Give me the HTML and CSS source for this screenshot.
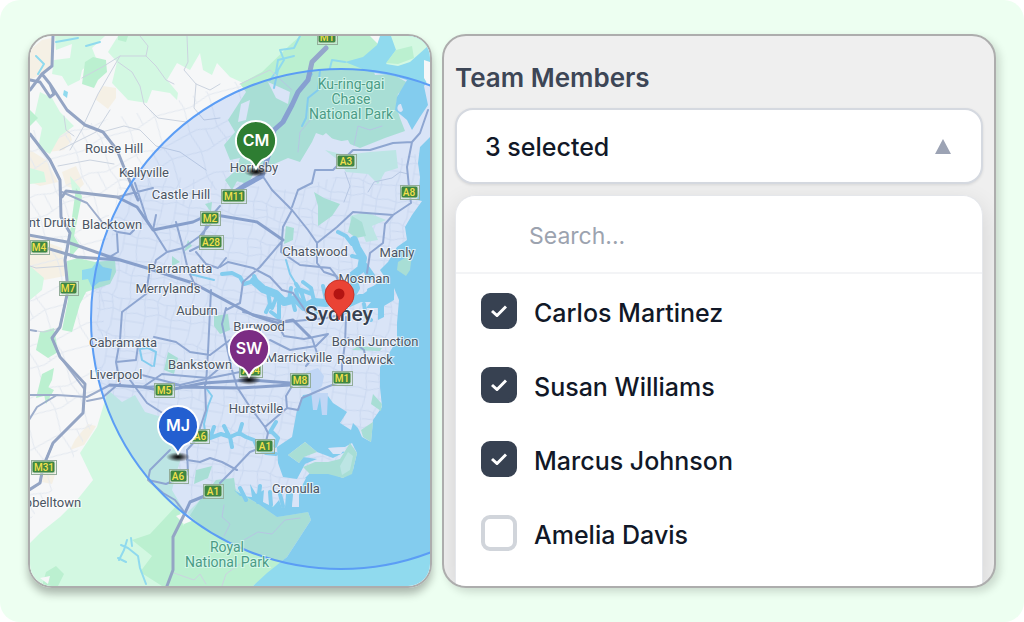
FILE: index.html
```html
<!DOCTYPE html>
<html lang="en">
<head>
    <meta charset="UTF-8">
    <meta name="viewport" content="width=device-width, initial-scale=1">
    <title>Team Map</title>
    <link rel="stylesheet" href="styles.css">
</head>
<body>
<main class="page">
    <section class="map-card" aria-label="Map of Sydney">
        <svg class="map" viewBox="30 36 400 550" preserveAspectRatio="xMidYMid slice">
            <defs>
                <pattern id="streets" width="46" height="38" patternUnits="userSpaceOnUse" patternTransform="rotate(9)">
                    <path class="street" d="M0 8 L14 6 L26 10 L46 8 M0 22 L10 24 L22 20 L35 24 L46 22 M8 38 L9 24 L6 8 L8 0 M22 38 V20 L19 8 L22 0 M36 38 L35 24 L38 9 L36 0 M22 31 L46 31 M0 31 H9 M9 15 L21 14 M29 10 V22"/>
                </pattern>
                <pattern id="blocks" width="58" height="46" patternUnits="userSpaceOnUse" patternTransform="rotate(-22)">
                    <path class="street" d="M0 12 L18 10 L34 15 L58 12 M0 30 L20 33 L42 28 L58 30 M12 46 L14 31 L10 11 L12 0 M40 46 L42 28 L38 14 L40 0 M26 12 L28 31"/>
                </pattern>
                <radialGradient id="shade">
                    <stop offset="0" stop-color="#000" stop-opacity="1"/>
                    <stop offset="0.4" stop-color="#111" stop-opacity="0.7"/>
                    <stop offset="1" stop-color="#222" stop-opacity="0"/>
                </radialGradient>
                <path id="pin" d="M-7 18.700 A20 20 0 1 1 7 18.700 C4 20 2 24 0 27.500 C-2 24 -4 20 -7 18.700 Z"/>
            </defs>

            <!-- land -->
            <rect class="land" x="30" y="36" width="400" height="550"/>
            <path class="sand" d="M30 50 L42 40 L52 38 V66 L42 74 L30 80 Z M103 86 L116 88 L116 98 L108 109 L95 99 Z M50 132 L68 126 L72 140 L64 150 L48 152 L44 142 Z M30 150 L46 160 L58 182 L40 186 L30 182 Z M62 172 L76 166 L84 184 L78 190 L66 186 Z M30 236 L62 248 L65 276 L44 280 L30 270 Z M75 440 L88 424 L96 426 L84 445 L70 450 Z M45 466 L56 472 L52 484 L42 482 Z"/>
            <path fill="url(#blocks)" d="M60 130 L150 110 L240 80 L260 190 H110 L100 400 L90 430 L60 480 L30 520 V130 Z"/>
            <path fill="url(#streets)" d="M120 170 L200 180 L290 190 L430 150 V420 L300 500 L190 500 L150 400 L100 400 L96 290 L110 250 Z"/>

            <!-- parks -->
            <path class="park-light" d="M118 36 H345 V80 L290 86 L270 70 L243 83 L230 77 L217 63 L212 75 L203 70 L200 53 L190 70 L177 63 L167 80 L178 93 L177 100 L170 93 L152 90 L147 103 L128 100 L112 83 L117 62 L108 52 Z"/>
            <path class="park-light" d="M55 36 H105 L92 48 L96 58 L82 70 L80 80 L68 86 L62 76 L52 74 L54 60 L70 58 L72 44 L56 50 Z M40 92 L52 98 L60 112 L74 126 L60 136 L50 154 L38 148 L42 128 L34 118 Z M30 168 L44 172 L46 182 L30 184 Z M70 176 L80 188 L82 200 L72 190 Z M30 266 L44 278 L42 290 L30 300 Z"/>
            <path class="park" d="M85 62 L93 57 L106 60 L107 72 L98 80 L94 88 L82 84 Z M118 36 H128 L126 42 L118 40 Z M30 110 L38 118 L30 126 Z M67 261 L78 258 L95 262 L115 260 L116 272 L110 284 L98 288 L86 292 L80 304 L72 332 L62 330 L68 300 Z M40 332 L54 328 L58 352 L48 358 L36 350 Z M76 188 L82 196 L74 236 L80 246 L70 258 L70 232 Z M42 374 L54 368 L52 380 L44 396 L36 398 Z M42 384 L54 390 L46 404 Z"/>
            <path class="park" d="M290 45 L262 72 L240 84 L246 92 L228 120 L235 132 L224 145 L230 160 L240 158 L232 180 L248 184 L258 165 L272 165 L288 158 L300 162 L312 142 L316 133 L330 138 L345 142 L360 148 L385 138 L405 131 L400 118 L396 106 L398 94 L410 84 L392 74 L375 75 L370 60 L384 50 L370 36 H300 Z"/>
            <path class="land" d="M268 82 L290 92 L288 104 L276 98 Z M315 142 L326 133 L336 142 L348 140 L352 148 L330 150 Z M241 104 L250 100 L246 120 L238 122 Z"/>
            <path class="park-light" d="M325 150 L345 155 L370 152 L396 150 L398 168 L385 172 L378 184 L368 174 L346 172 L338 160 Z M350 216 L366 212 L386 220 L372 226 L378 240 L366 242 L362 232 L352 234 Z"/>
            <path class="park" d="M225 180 L234 172 L240 176 L232 190 Z M314 192 L324 198 L340 204 L332 216 L318 226 L318 206 Z M286 226 L294 228 L293 240 L284 244 Z M172 256 L180 262 L172 266 Z M188 240 L192 246 L184 252 Z M214 316 L228 314 L230 330 L220 334 L214 326 Z M352 216 L362 222 L366 236 L356 238 L348 232 Z M205 204 L212 202 L211 212 Z M168 352 L178 358 L174 374 L164 370 Z M358 346 L382 348 L380 351 L352 350 Z"/>
            <path class="park-light" d="M103 407 L108 390 L122 402 L135 395 L145 412 L165 418 L168 440 L182 455 L176 474 L172 490 L186 514 L200 500 L222 480 L257 503 L308 512 L300 537 L253 586 H30 V543 L40 533 L60 517 L77 500 L93 480 L80 453 L97 427 Z"/>
            <path class="park" d="M183 526 L200 500 L216 480 L234 478 L236 492 L257 503 L277 517 L308 512 L311 520 L300 537 L287 557 L253 586 H162 L140 572 L152 556 L132 540 L150 534 L165 518 L178 504 Z M46 572 L56 566 L64 574 L58 586 H42 Z M196 470 L212 466 L208 478 L194 484 Z"/>
            <path class="land" d="M176 516 L186 512 L194 520 L184 524 Z M40 578 L50 576 L48 584 Z"/>

            <!-- ocean and bays -->
            <path class="water" d="M380 36 L377 45 L363 57 L345 62 L370 72 L394 76 L407 80 L397 97 L395 110 L407 120 L412 130 L420 117 L428 105 L424 86 L430 78 V137 L420 147 L418 163 L420 177 L419 190 L417 200 L422 201 L412 215 L405 227 L407 240 L397 247 L388 262 L380 270 L384 276 L374 286 L363 294 L371 302 L366 308 L378 308 L378 320 L384 317 L384 306 L394 300 L394 288 L399 300 L397 323 L397 340 L391 350 L387 357 L380 367 L380 387 L382 407 L373 420 L371 442 L362 437 L358 428 L353 423 L351 430 L340 423 L347 412 L333 403 L328 396 L317 393 L303 395 L297 410 L292 437 L277 447 L278 463 L283 477 L297 479 L305 464 L317 459 L303 457 L299 463 L288 455 L305 442 L317 452 L333 458 L345 452 L328 448 L345 447 L352 443 L357 453 L353 470 L343 478 L330 473 L310 473 L300 483 L298 507 L292 507 L294 493 L286 494 L285 507 L282 508 L279 500 L273 507 L263 502 L264 490 L256 494 L250 484 L252 497 L240 496 L234 490 L257 503 L277 517 L290 515 L308 512 L311 520 L300 537 L287 557 L267 573 L253 586 H430 V36 Z"/>
            <path class="park-light" d="M391 36 H418 L428 46 L410 62 L398 66 L386 64 L396 50 Z"/>
            <path class="park" d="M396 50 L412 46 L414 58 L398 64 L386 63 Z M398 262 L412 254 L410 270 L406 276 L397 270 Z M373 394 L382 404 L381 411 L371 404 Z M361 430 L373 422 L371 442 L363 437 Z M288 455 L305 442 L317 452 L304 457 L299 463 Z M328 462 L340 459 L350 443 L357 453 L352 474 L343 478 L328 474 L310 474 L303 467 L315 462 Z"/>
            <path class="land" d="M328 448 L346 447 L341 454 L333 454 Z M294 482 L306 478 L299 492 L299 507 L292 507 Z M401 104 A3 4 0 1 0 403 110 Z M424 60 L430 62 V88 L424 78 Z"/>
            <path class="park-light" d="M340 466 L348 452 L353 456 L350 470 L342 475 Z"/>
            <path class="airport" d="M303 386 L306 372 L318 368 L324 376 L322 386 L314 393 H328 L327 415 L322 415 L320 397 L317 410 L313 410 L311 390 Z"/>
            <path class="water" d="M82 270 L92 268 L97 261 L103 267 L112 269 L110 280 L99 282 L92 288 L88 279 L82 280 Z M64 90 L68 92 L67 98 L63 95 Z"/>

            <!-- harbour, rivers and creeks -->
            <path class="river wide" d="M254 281 L263 289 L276 294 L284 302 L296 299 L304 307 L314 302 L326 303 L337 298 L349 303 L360 298 L376 298 M350 298 L356 288 L352 276 L361 269 L363 258 L357 248 L354 240 M364 266 L371 276"/>
            <path class="river mid" d="M222 274 L232 273 L240 277 L244 284 L254 281 M258 284 L254 276 M268 292 L270 304 L266 312 M277 296 L272 308 M289 300 L291 288 M298 300 L296 290 M305 304 L302 294 L296 284 M301 290 L312 294 M314 301 L311 288 L303 282 M326 300 L323 286 M335 300 L336 286 M346 300 L346 312 M364 304 L366 317 L371 320 M352 244 L346 236 L338 232 M361 258 L352 256 M369 290 L378 286 M279 302 L279 318 L271 312 M293 302 L295 310 M315 304 L316 313"/>
            <path class="river mid" d="M204 432 L210 438 L221 434 L230 437 L239 433 L246 437 L254 440 L258 449 L266 453 L276 454 M210 438 L214 427 M229 436 L224 426 M239 434 L242 424 M230 437 L232 447 M272 432 L278 438 L275 446 M276 422 L270 432"/>
            <path class="river mid" d="M246 500 L240 488 M258 502 L260 486 M271 505 L270 492 M283 506 L280 494"/>
            <path class="river" d="M296 284 L290 274 L286 260 M206 438 L204 424 L208 406 L212 396 L206 388 M127 540 L124 550 L119 560 M121 545 L128 548 L138 556 L140 568 L146 584 M118 558 L126 562 M132 546 L131 538"/>
            <path class="river" d="M140 349 L148 348 L156 352 L154 366 M140 350 L142 360 L152 366 M190 274 L214 280 M294 56 L278 60 L276 72 L270 80 M300 36 L294 48 L280 50 L284 60 L278 70 L274 88 M320 70 L318 90 L308 98 L306 118 L302 126 M312 74 L304 86 M345 62 L332 60 L330 68 M56 42 L78 38 M86 46 L100 42 M36 56 L44 64 L38 74"/>

            <!-- minor roads -->
            <path class="road thin" d="M140 36 L148 46 L146 56 L120 56 L104 66 L82 78 M187 36 L188 62 L184 70 L196 84 L210 90 L220 84 M196 84 L194 108 L204 120 L220 118 M146 56 L156 66 L166 80 L174 84 M118 62 L132 72 L140 86 L144 104 L158 118 L186 122 M120 56 L98 94 L84 124 M84 126 L70 150 M64 116 L66 130 L74 136 M102 132 L124 126 L140 130 L156 146 L180 152 L206 170 M58 166 L90 160 L114 164 M60 150 L96 132 L110 110 M240 84 L270 70 L292 90 M298 152 L300 132 L312 118 M354 145 L358 126 L370 130 L382 126 M345 172 L350 186 L344 202 M368 192 L374 182 L392 178 L400 172 L408 174 M30 266 L36 268 L65 266 M224 505 L222 517 L230 524 L224 536 M244 540 L258 532 L272 534 L285 520 L300 518 M222 586 L226 574 L240 564 M30 330 L44 332 L60 328 M174 573 L194 580 L200 574 L206 584"/>

            <!-- main roads -->
            <path class="road" d="M117 197 L153 188 M118 232 L130 234 L134 230 M117 234 L118 252 L108 258 M120 384 L116 362 L120 340 L122 312 L146 294 L150 268 M116 362 L136 360 L138 346 M135 183 L147 220 L167 252 L183 248 L200 236 L212 222 M153 230 L156 215 M167 252 L156 260 L154 268 M183 248 L176 222 M183 248 L188 270 L194 283 M190 251 L200 246 L208 220 L220 206 M196 252 L206 264 L218 268 L226 258 M211 290 L208 352 L206 384 M154 337 L176 342 L190 352 L210 355 L230 340 M143 387 L162 374 L208 378 L222 366 M142 375 L180 385 M187 460 L200 462 L210 458 L222 462 L237 470"/>
            <path class="road" d="M264 178 L272 190 L292 210 L308 230 L317 243 V263 M292 207 L298 190 L312 183 L315 170 L333 170 L353 150 L370 150 L393 143 L412 142 L420 133 L428 110 M412 142 L407 167 L409 187 L411 203 L393 215 L353 212 L337 227 L317 243 M393 215 L385 224 L383 243 L370 253 L367 273 M292 210 L283 227 L281 252 L300 265 L330 268 L338 278 M317 263 L324 272 L336 276 L345 296 M283 240 L260 267 L243 282 L240 303 L226 310 M220 267 L228 262 L253 268 L270 277 L282 290 L293 293 L307 313 M277 323 L284 336 L304 339 L328 334 L316 346 L290 350 L270 340 M312 338 L317 353 L306 366 M243 312 L286 322 L326 318 L344 314 M346 317 L345 343 L342 366 V380 M348 338 L364 350 L366 360 M226 308 L222 324 L228 352 L232 370 L237 387 L250 407 L265 427 L268 433 L265 446 L250 452 L233 470 L220 483 M265 427 L287 408 L298 410 L302 398 L327 387 L345 380 M287 408 L286 396 L292 386"/>
            <path class="road" d="M29 490 L40 483 L43 467 L53 443 L83 413 L85 390 L60 357 L52 338 L60 327 L68 290 L65 260 L70 233 L61 217 V200 L60 180 L50 160 L30 134 M29 395 L57 395 L87 397 L110 385 L143 387 L180 385 L210 378 L240 372 M29 420 L37 407 L57 395 M87 401 L102 398 L116 386 M130 380 L147 403 L164 414 M170 450 L150 470 L148 480 L163 493 L175 500 L185 513 M148 480 L166 484 L188 474 L187 450 L196 440 L206 410 L205 384 M62 192 L87 203 L102 222 L117 232 M30 330 L36 331"/>
            <path class="road bold" d="M53 36 L52 66 L42 74 L50 84 L67 110 L85 125 L103 132 L117 150 L125 170 L138 200 M30 80 L40 82 L50 97 L54 94 L50 84 M30 90 L42 74 M62 197 L66 191 L117 197 L137 207 L153 230 L193 222 L210 214 L257 222 L283 240 M29 235 L67 242 L110 257 L147 268 M29 243 L77 257 L120 260 L147 268 L177 278 L193 283 L230 303 L253 315 L277 323 L293 320 L310 337 M110 385 L143 387 L164 391 L204 383 L250 380 L290 383 L306 386 M180 387 L240 388 L290 385"/>
            <path class="road bold" d="M30 134 L50 160 L60 180 L61 217 L70 233 L65 260 L68 290 L60 327 L52 338 L60 357 L85 384 L83 413 L53 443 L43 467 L40 483 L29 490 M185 513 L190 502 L207 495 L220 490 M185 513 L173 537 V570 L167 586"/>
            <path class="road heavy" d="M326 48 L312 62 L308 80 L298 92 L292 105 L283 122 L274 130 L270 150 L262 176 L244 186 L226 198"/>

            <!-- radius -->
            <circle class="radius" cx="341" cy="319" r="250"/>

            <!-- road shields -->
            <g class="shields">
                <rect x="318" y="32" width="18" height="11" rx="2"/><text x="327" y="41">M1</text>
                <rect x="337" y="155" width="18" height="12" rx="2"/><text x="346" y="165">A3</text>
                <rect x="401" y="186" width="17" height="12" rx="2"/><text x="409" y="196">A8</text>
                <rect x="222" y="190" width="23" height="12" rx="2"/><text x="234" y="200">M11</text>
                <rect x="201" y="212" width="18" height="12" rx="2"/><text x="210" y="222">M2</text>
                <rect x="200" y="236" width="22" height="12" rx="2"/><text x="211" y="246">A28</text>
                <rect x="31" y="241" width="17" height="12" rx="2"/><text x="39" y="251">M4</text>
                <rect x="60" y="282" width="17" height="12" rx="2"/><text x="68" y="292">M7</text>
                <rect x="240" y="364" width="21" height="12" rx="2"/><text x="251" y="374">A34</text>
                <rect x="291" y="374" width="18" height="12" rx="2"/><text x="300" y="384">M8</text>
                <rect x="333" y="372" width="18" height="12" rx="2"/><text x="342" y="382">M1</text>
                <rect x="155" y="384" width="18" height="12" rx="2"/><text x="164" y="394">M5</text>
                <rect x="191" y="430" width="17" height="12" rx="2"/><text x="200" y="440">A6</text>
                <rect x="170" y="470" width="17" height="12" rx="2"/><text x="178" y="480">A6</text>
                <rect x="204" y="485" width="18" height="12" rx="2"/><text x="213" y="495">A1</text>
                <rect x="256" y="440" width="17" height="12" rx="2"/><text x="265" y="450">A1</text>
                <rect x="32" y="461" width="23" height="12" rx="2"/><text x="44" y="471">M31</text>
            </g>

            <!-- place names -->
            <g class="places">
                <text x="114" y="153">Rouse Hill</text>
                <text x="144" y="177">Kellyville</text>
                <text x="181" y="199">Castle Hill</text>
                <text x="254" y="172">Hornsby</text>
                <text x="52" y="227">nt Druitt</text>
                <text x="112" y="229">Blacktown</text>
                <text x="180" y="273">Parramatta</text>
                <text x="168" y="293">Merrylands</text>
                <text x="197" y="315">Auburn</text>
                <text x="123" y="347">Cabramatta</text>
                <text x="116" y="379">Liverpool</text>
                <text x="200" y="369">Bankstown</text>
                <text x="259" y="331">Burwood</text>
                <text x="315" y="256">Chatswood</text>
                <text x="397" y="257">Manly</text>
                <text x="364" y="283">Mosman</text>
                <text x="375" y="346">Bondi Junction</text>
                <text x="299" y="362">Marrickville</text>
                <text x="365" y="364">Randwick</text>
                <text x="256" y="413">Hurstville</text>
                <text x="296" y="493">Cronulla</text>
                <text x="53" y="507">pbelltown</text>
                <text class="city" x="339" y="321">Sydney</text>
            </g>
            <g class="parks">
                <text x="351" y="89">Ku-ring-gai</text>
                <text x="351" y="104">Chase</text>
                <text x="351" y="119">National Park</text>
                <text x="227" y="552">Royal</text>
                <text x="227" y="567">National Park</text>
            </g>

            <!-- markers -->
            <g class="home">
                <path d="M339 320 C338 309 325 307 325 294.500 A14.500 14.500 0 0 1 354 294.500 C354 307 341 309 339 320 Z"/>
                <circle cx="339" cy="294" r="5.500"/>
            </g>
            <g class="marker" transform="translate(256 141)">
                <ellipse cx="0" cy="31" rx="12" ry="5" fill="url(#shade)"/>
                <use class="green" href="#pin"/>
                <text y="5">CM</text>
            </g>
            <g class="marker" transform="translate(249 349)">
                <ellipse cx="0" cy="31" rx="12" ry="5" fill="url(#shade)"/>
                <use class="purple" href="#pin"/>
                <text y="5">SW</text>
            </g>
            <g class="marker" transform="translate(178 426)">
                <ellipse cx="0" cy="31" rx="12" ry="5" fill="url(#shade)"/>
                <use class="blue" href="#pin"/>
                <text y="5">MJ</text>
            </g>
        </svg>
    </section>

    <section class="panel">
        <h2 class="title" id="team">Team Members</h2>
        <button class="select" type="button" aria-expanded="true" aria-controls="options">
            <span>3 selected</span>
            <svg class="arrow" viewBox="0 0 16 16"><path d="M8 0 L16 15 H0 Z"/></svg>
        </button>
        <div class="dropdown" id="options" role="group" aria-labelledby="team">
            <div class="search">
                <input type="text" placeholder="Search..." aria-label="Search">
            </div>
            <ul class="list">
                <li><label><input type="checkbox" checked><span>Carlos Martinez</span></label></li>
                <li><label><input type="checkbox" checked><span>Susan Williams</span></label></li>
                <li><label><input type="checkbox" checked><span>Marcus Johnson</span></label></li>
                <li><label><input type="checkbox"><span>Amelia Davis</span></label></li>
            </ul>
        </div>
    </section>
</main>
</body>
</html>
```
FILE: styles.css
```css
*{
    margin: 0;
    padding: 0;
    box-sizing: border-box;
}

body{
    background-color: #fff;
    font-family: Inter, "Liberation Sans", sans-serif;
    color: #111827;
}

.page{
    display: grid;
    grid-template-columns: 404fr 554fr;
    gap: 10px;
    min-height: 100vh;
    padding: 34px 28px;
    background-color: #edfff1;
    border-radius: 20px;
}

.map-card,
.panel{
    border: 2px solid #adadad;
    border-radius: 24px;
    overflow: hidden;
}

/* map */
.map-card{
    box-shadow: 0 6px 8px rgba(0, 0, 0, 0.28);
}

.map{
    display: block;
    width: 100%;
    height: 100%;
    font-family: Roboto, "Liberation Sans", sans-serif;
    text-anchor: middle;
}

.land{
    fill: #f6f7f8;
}

.sand{
    fill: #f5f0e5;
}

.park-light{
    fill: #d3f8e2;
}

.park{
    fill: #bbf0d0;
}

.water{
    fill: #90daee;
}

.airport{
    fill: #d8e6f6;
}

.street,
.road,
.river{
    fill: none;
    stroke-linejoin: round;
    stroke-linecap: round;
}

.street{
    stroke: #e4e9f0;
    stroke-width: 1;
}

.river{
    stroke: #90daee;
    stroke-width: 2;
}

.river.mid{
    stroke-width: 4;
}

.river.wide{
    stroke-width: 8;
}

.road{
    stroke: #9dadcb;
    stroke-width: 2;
}

.road.thin{
    stroke: #cbd3df;
    stroke-width: 1;
}

.road.bold{
    stroke: #94a5c4;
    stroke-width: 3;
}

.road.heavy{
    stroke: #94a6cb;
    stroke-width: 5;
}

.radius{
    fill: rgba(66, 133, 244, 0.16);
    stroke: #5b9df5;
    stroke-width: 2;
}

.shields rect{
    fill: #3f8642;
    stroke: #d5e3d3;
    stroke-width: 1;
    outline: 1px solid #93ad9a;
    outline-offset: 0;
}

.shields text{
    fill: #f3e04c;
    font-size: 10px;
    font-weight: 500;
}

.places text{
    fill: #4b5563;
    font-size: 13px;
    paint-order: stroke;
    stroke: rgba(255, 255, 255, 0.7);
    stroke-width: 2;
}

.places .city{
    fill: #374151;
    font-size: 21px;
    font-weight: 500;
}

.parks text{
    fill: #4b9b85;
    font-size: 14px;
    paint-order: stroke;
    stroke: rgba(220, 250, 240, 0.8);
    stroke-width: 2;
}

.home path{
    fill: #ea4335;
    stroke: #c5352b;
    stroke-width: 1;
}

.home circle{
    fill: #b31412;
}

.marker use{
    stroke: #fff;
    stroke-width: 2;
}

.marker text{
    fill: #fff;
    font-family: Inter, "Liberation Sans", sans-serif;
    font-size: 16px;
    font-weight: 600;
}

.green{
    fill: #2e7d32;
}

.purple{
    fill: #7b2c83;
}

.blue{
    fill: #235fd0;
}

/* team members */
.panel{
    display: flex;
    flex-direction: column;
    padding: 26px 11px 0;
    background-color: #efefef;
    box-shadow: 4px 4px 8px rgba(0, 0, 0, 0.15);
}

.title{
    margin-bottom: 14px;
    font-size: 26px;
    line-height: 32px;
    font-weight: 600;
    color: #3d4656;
}

.select{
    display: flex;
    justify-content: space-between;
    align-items: center;
    height: 76px;
    flex-shrink: 0;
    padding: 2px 30px 0 28px;
    border: 2px solid #d5d9e0;
    border-radius: 18px;
    background-color: #fff;
    box-shadow: 0 1px 3px rgba(0, 0, 0, 0.1);
    font: 500 25px/32px Inter, "Liberation Sans", sans-serif;
    color: #111827;
}

.arrow{
    width: 16px;
    height: 16px;
    fill: #9ca3b4;
}

.dropdown{
    flex: 1;
    margin-top: 11px;
    border: 1px solid #e5e7eb;
    border-bottom: 0;
    border-radius: 20px 20px 0 0;
    background-color: #fff;
    box-shadow: 0 8px 24px rgba(0, 0, 0, 0.12);
}

.search{
    padding: 22px 24px 18px;
    border-bottom: 2px solid #f3f4f6;
}

.search input{
    display: block;
    width: 100%;
    height: 36px;
    padding: 0 49px;
    border: 0;
    outline: 0;
    background: none;
    font: 400 23px/36px Inter, "Liberation Sans", sans-serif;
    color: #111827;
}

.search input::placeholder{
    color: #9ca3af;
}

.list{
    list-style: none;
}

.list label{
    display: flex;
    align-items: center;
    gap: 17px;
    height: 74px;
    padding: 0 25px;
    font-size: 25px;
    font-weight: 500;
    line-height: 32px;
}

.list span{
    padding-top: 4px;
}

.list input{
    appearance: none;
    width: 36px;
    height: 36px;
    border: 4px solid #d1d5db;
    border-radius: 9px;
    background-color: #fff;
}

.list input:checked{
    border-color: #374151;
    background: #374151 url("data:image/svg+xml,%3Csvg xmlns='http://www.w3.org/2000/svg' viewBox='0 0 16 12'%3E%3Cpath d='M1 6 L6 10.500 L15 1.500' fill='none' stroke='white' stroke-width='3'/%3E%3C/svg%3E") center / 16px 12px no-repeat;
}
```
